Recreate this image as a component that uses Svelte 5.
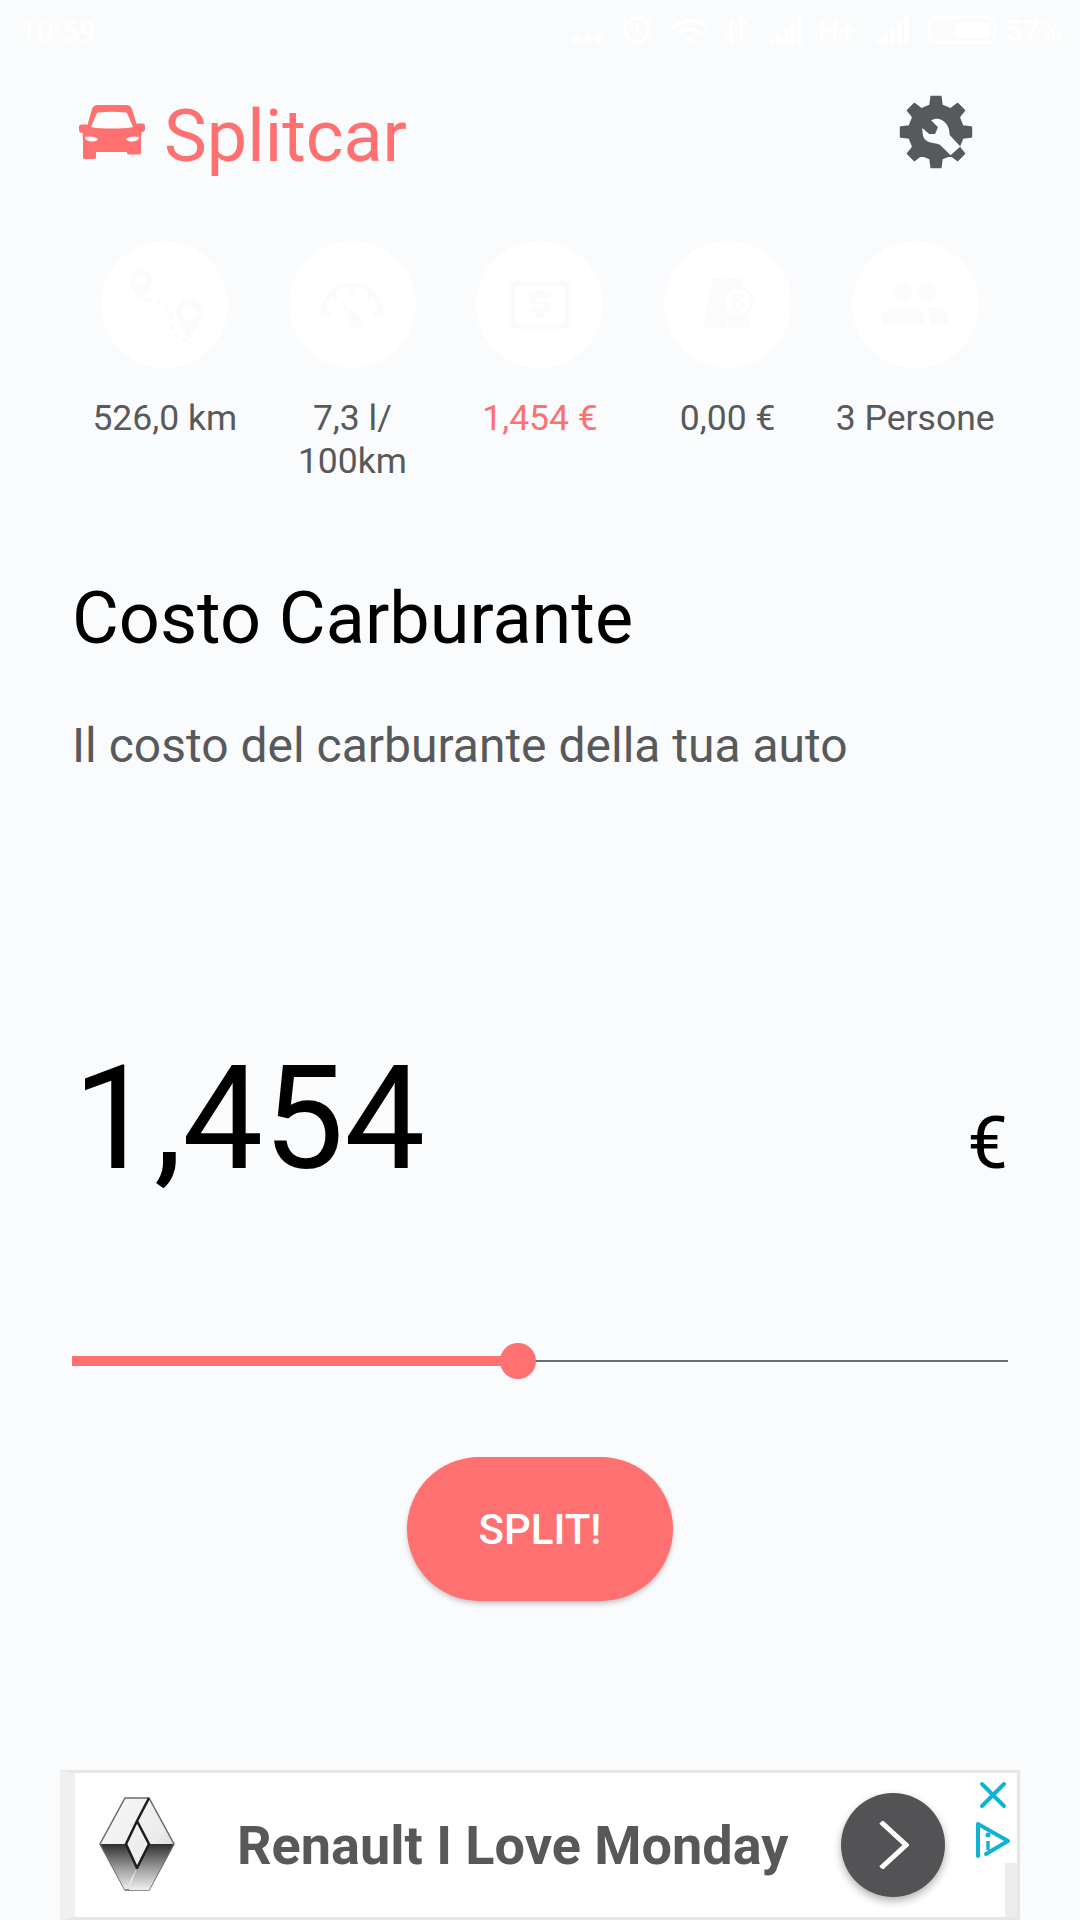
<script>
  const coral = '#ff7070';

  // outline of an 8-tooth cog, centred on 0,0
  function cogPath(inner, outer, teeth = 8) {
    const pts = [];
    const step = (Math.PI * 2) / teeth;
    for (let i = 0; i < teeth; i++) {
      const a = i * step - Math.PI / 2;
      const base = step * 0.27;
      const tip = step * 0.17;
      pts.push([a - base, inner], [a - tip, outer], [a + tip, outer], [a + base, inner]);
    }
    const xy = pts.map(([a, r]) => `${(Math.cos(a) * r).toFixed(2)} ${(Math.sin(a) * r).toFixed(2)}`);
    return 'M' + xy.join('L') + 'Z';
  }

  const stats = [
    { id: 'route', label: '526,0 km' },
    { id: 'gauge', label: '7,3 l/ 100km' },
    { id: 'cash', label: '1,454 €', active: true },
    { id: 'toll', label: '0,00 €' },
    { id: 'people', label: '3 Persone' },
  ];

  let value = $state(0.477);
</script>

{#snippet signal()}
  <svg width="35" height="28" viewBox="0 0 35 28" fill="#fff">
    <path d="M0 24h5v4H0zM7 18h5v10H7zM14 12h5v16h-5zM21 6h5v22h-5zM28 0h5v28h-5z" />
  </svg>
{/snippet}

<div class="page">
  <div class="status">
    <span class="clock">10:59</span>
    <div class="status-right">
      <svg class="tray" width="180" height="30" viewBox="0 0 180 30" fill="#fff">
        <circle cx="5" cy="24" r="4" /><circle cx="16" cy="24" r="4" /><circle cx="27" cy="24" r="4" />
        <circle cx="66" cy="15" r="12" fill="none" stroke="#fff" stroke-width="3" />
        <path d="M66 9v6l4 4M54 3l-3 3M78 3l3 3" fill="none" stroke="#fff" stroke-width="2.500" />
        <path d="M100 12a26 26 0 0 1 38 0l-3 3a21 21 0 0 0-32 0zM107 18a16 16 0 0 1 24 0l-3 3a11 11 0 0 0-18 0zM115 24a6 6 0 0 1 8 0l-4 5z" />
        <path d="M160 4v22l-5-6M170 26V4l6 6" fill="none" stroke="#fff" stroke-width="3" />
      </svg>
      <div class="cell one">{@render signal()}</div>
      <span class="net">H+</span>
      <div class="cell two">{@render signal()}</div>
      <div class="battery"><i></i></div>
      <span class="pct">57%</span>
    </div>
  </div>

  <header>
    <div class="brand">
      <svg class="car" width="66" height="54" viewBox="9 10 66 54">
        <path
          fill={coral}
          fill-rule="evenodd"
          d="M28 10h28c3 0 5 1.500 6 4l4.500 15 1-.5h5c1.500 0 2.500 1 2.500 2.500v3c0 1.500-1 3-3 3h-1c1 1.500 0 3 0 5v15.500c0 1-.5 2-2 2h-10c-1.500 0-2-1-2-2V57H26v5c0 1-.5 2-2 2H15c-1.500 0-2-1-2-2V44c0-2-1-3.500 0-6h-1c-2 0-3-1.500-3-3v-3c0-1.500 1-2.500 2.500-2.500h5l1 .5L22 14c1-2.500 3-4 6-4zM28.500 17.500c-1 0-1.500.5-2 1.500L21 32c7 2 35 2 42 0l-5.500-13c-.5-1-1-1.500-2-1.500-9-1-18-1-27 0zM15 42c0 3 3 4.500 8 4.500 3 0 5-1 5-2.500-2-2-8-3.500-13-2zM69 42c-5-1.500-11 0-13 2 0 1.500 2 2.500 5 2.500 5 0 8-1.500 8-4.500z"
        />
      </svg>
      <span class="name">Splitcar</span>
    </div>
    <button class="settings" aria-label="settings">
      <svg width="74" height="74" viewBox="-38 -38 76 76">
        <path d={cogPath(28, 36.500)} fill="#58595b" stroke="#58595b" stroke-width="2" stroke-linejoin="round" />
        <path
          transform="translate(-46 -47)"
          fill="#fafbfd"
          d="M41 35c5-3 11-2 15 3 3 3 4 8 4 12l11 12-10 9-11-11c-5-2-12-1-16-6-2-3-2-8-2-11l7 6h6l3-7z"
        />
      </svg>
    </button>
  </header>

  <div class="stats">
    {#each stats as s}
      <div class="stat">
        <div class="disc">
          {#if s.id === 'route'}
            <svg width="80" height="80" viewBox="0 0 80 80" fill="#fafbfd">
              <path fill-rule="evenodd" d="M16 4c6 0 11 5 11 11 0 4-5 13-11 20C10 28 5 19 5 15 5 9 10 4 16 4zm0 7a4.500 4.500 0 1 0 0 9 4.500 4.500 0 0 0 0-9z" />
              <path fill-rule="evenodd" d="M64 34c7 0 13 6 13 13 0 5-7 17-13 27-6-10-13-22-13-27 0-7 6-13 13-13zm0 6a7 7 0 1 0 0 15 7 7 0 0 0 0-15z" />
              <path d="M21 35c14-1 24 6 25 20 1 14 6 20 18 20" fill="none" stroke="#fafbfd" stroke-width="3" stroke-dasharray="6 4" />
            </svg>
          {:else if s.id === 'gauge'}
            <svg width="66" height="50" viewBox="0 0 66 50" fill="#fafbfd">
              <path d="M1 35a32 32 0 0 1 64 0H54c-2 0-2-4 0-4h5.500a26.500 26.500 0 0 0-6.500-15l-3 3c-2 1-4-1-3-3l3-3a26.500 26.500 0 0 0-15-6.500V12c-1 2-4 2-4 0V6.500A26.500 26.500 0 0 0 16 13l3 3c1 2-1 4-3 3l-3-3a26.500 26.500 0 0 0-6.500 15H12c2 0 2 4 0 4z" />
              <path d="M22 22c8 5 15 10 21 17 2 4-1 9-5 9-3 0-5-1-6-4z" />
            </svg>
          {:else if s.id === 'cash'}
            <svg width="60" height="48" viewBox="0 0 60 48">
              <rect x="2.500" y="2.500" width="55" height="43" rx="3" fill="none" stroke="#fafbfd" stroke-width="5" />
              <path d="M26 9h8v3h6v5H26v4h14v11h-6v5h-8v-5h-6v-5h14v-4H20V12h6z" fill="#fafbfd" />
            </svg>
          {:else if s.id === 'toll'}
            <svg class="toll" width="50" height="50" viewBox="0 0 50 50" fill="#fafbfd">
              <path d="M10 0h28l9 50H0z" />
              <path d="M24 0v8M24 42v8" stroke="#fff" stroke-width="2" stroke-dasharray="5 3" />
              <circle cx="35" cy="24" r="15.500" />
              <circle cx="35" cy="24" r="13" fill="#fff" />
              <text class="coin" x="35" y="32" text-anchor="middle">$</text>
            </svg>
          {:else}
            <svg width="66" height="44" viewBox="0 0 66 44" fill="#fafbfd">
              <circle cx="21" cy="9" r="9" /><circle cx="45" cy="9" r="9" />
              <path d="M0 42V33c0-6 10-9 21-9s21 3 21 9v9zM48 42V31c0-3-2-6-5-7 10-1 23 2 23 9v9z" />
            </svg>
          {/if}
        </div>
        <span class="label" class:active={s.active}>{s.label}</span>
      </div>
    {/each}
  </div>

  <section class="intro">
    <h1>Costo Carburante</h1>
    <p>Il costo del carburante della tua auto</p>
  </section>

  <div class="amount">
    <span class="figure">1,454</span>
    <span class="unit">€</span>
  </div>

  <div class="slider" style:--value="{value * 100}%">
    <div class="slider-fill"></div>
    <div class="slider-handle"></div>
  </div>

  <button class="split">SPLIT!</button>

  <aside class="ad">
    <svg class="logo" width="76" height="94" viewBox="14 13 76 94">
      <defs>
        <linearGradient id="upper" x1="0" y1="0" x2="1" y2="1">
          <stop offset="0" stop-color="#f8f8f8" />
          <stop offset="0.6" stop-color="#ececec" />
          <stop offset="1" stop-color="#c4c4c4" />
        </linearGradient>
        <linearGradient id="lower" x1="0" y1="0" x2="0" y2="1">
          <stop offset="0" stop-color="#2e2e2e" />
          <stop offset="0.55" stop-color="#a0a0a0" />
          <stop offset="1" stop-color="#f0f0f0" />
        </linearGradient>
      </defs>
      <path d="M40 14h24L89 60 64 106H40L15 60z" fill="url(#upper)" stroke="#6a6a6a" stroke-width="1.500" />
      <path d="M15.500 60H41l11 24-12 22z" fill="url(#lower)" />
      <path d="M88.500 60H64L52 84l-8 22h20z" fill="url(#lower)" />
      <path d="M41 60 52 37 64 60 52 84zM52 37 64 14" fill="none" stroke="#1c1c1c" stroke-width="2.500" stroke-linejoin="round" />
    </svg>
    <span class="headline">Renault I Love Monday</span>
    <div class="go">
      <svg width="32" height="48" viewBox="0 0 32 48"><path d="M4 1l25 23L4 47" fill="none" stroke="#fff" stroke-width="5" /></svg>
    </div>
    <div class="ad-marks">
      <svg width="28" height="28" viewBox="0 0 28 28"><path d="M3 3l22 22M25 3 3 25" stroke="#0fb4d4" stroke-width="4" stroke-linecap="round" /></svg>
      <svg width="36" height="38" viewBox="0 0 36 38">
        <path d="M3 3 33 20 11 33M3 3v32" fill="none" stroke="#0fb4d4" stroke-width="4" stroke-linecap="round" stroke-linejoin="round" />
        <circle cx="13" cy="14" r="2.500" fill="#0fb4d4" />
        <path d="M13 20v9" stroke="#0fb4d4" stroke-width="3.500" />
      </svg>
    </div>
    <div class="ad-corner"></div>
  </aside>
</div>

<style>
  :global(body) {
    margin: 0;
    background: #fafbfd;
  }

  .page {
    height: 1920px;
    box-sizing: border-box;
    display: flex;
    flex-direction: column;
    overflow: hidden;
    background: #fafbfd;
    color: #000;
    font-family: Roboto, "Liberation Sans", sans-serif;
  }

  .status {
    height: 60px;
    box-sizing: border-box;
    padding: 14px 18px 0 20px;
    display: flex;
    justify-content: space-between;
    color: #fff;
    font-size: 30px;
    font-weight: 500;
  }
  .status-right {
    display: flex;
    align-items: center;
    height: 32px;
  }
  .cell {
    display: flex;
    margin-left: 18px;
  }
  .net {
    margin-left: 14px;
  }
  .cell.two {
    margin-left: 20px;
  }
  .battery {
    width: 68px;
    height: 28px;
    margin-left: 17px;
    box-sizing: border-box;
    border: 3px solid #fff;
    border-radius: 8px;
    padding: 3px;
    display: flex;
    justify-content: flex-end;
  }
  .battery i {
    width: 34px;
    background: #fff;
  }
  .pct {
    margin-left: 10px;
  }

  header {
    height: 128px;
    box-sizing: border-box;
    padding: 43px 107px 0 79px;
    display: flex;
    justify-content: space-between;
  }
  .brand {
    display: flex;
    align-items: flex-start;
    gap: 19px;
    height: 68px;
    color: #ff7070;
  }
  .car {
    margin-top: 2px;
  }
  .name {
    font-size: 72px;
    line-height: 68px;
  }
  .settings {
    width: 74px;
    height: 74px;
    margin-top: -8px;
    padding: 0;
    border: 0;
    background: none;
  }

  .stats {
    margin-top: 53px;
    padding: 0 71px;
    display: grid;
    grid-template-columns: repeat(5, 1fr);
  }
  .stat {
    display: flex;
    flex-direction: column;
    align-items: center;
  }
  .disc {
    width: 127px;
    height: 127px;
    border-radius: 50%;
    background: #fff;
    display: flex;
    align-items: center;
    justify-content: center;
  }
  .toll {
    margin-top: -4px;
  }
  .coin {
    font-size: 24px;
    font-weight: 700;
  }
  .label {
    width: 170px;
    margin-top: 29px;
    text-align: center;
    font-size: 35.500px;
    line-height: 43px;
    color: #58595b;
  }
  .label.active {
    color: #ff7070;
  }

  .intro {
    margin-top: 96px;
    padding: 0 72px;
    height: 220px;
  }
  h1 {
    margin: 0;
    font-size: 72px;
    font-weight: 400;
    line-height: 80px;
  }
  p {
    margin: 61px 0 0;
    font-size: 48px;
    line-height: 52px;
    color: #58595b;
  }

  .amount {
    margin-top: 235px;
    padding: 0 72px 0 73px;
    display: flex;
    justify-content: space-between;
    align-items: baseline;
    height: 170px;
  }
  .figure {
    font-size: 144px;
    line-height: 170px;
  }
  .unit {
    font-size: 72px;
  }

  .slider {
    position: relative;
    margin: 156px 72px 0;
    height: 2px;
    background: #6d6e70;
  }
  .slider-fill {
    position: absolute;
    left: 0;
    top: -4px;
    width: var(--value);
    height: 10px;
    background: #ff7070;
  }
  .slider-handle {
    position: absolute;
    left: var(--value);
    top: 1px;
    width: 36px;
    height: 36px;
    transform: translate(-50%, -50%);
    border-radius: 50%;
    background: #ff7070;
  }

  .split {
    align-self: center;
    width: 266px;
    height: 144px;
    margin-top: 95px;
    padding: 0;
    border: 0;
    border-radius: 72px;
    background: #ff7070;
    box-shadow: 0 3px 5px rgba(0, 0, 0, 0.2);
    color: #fff;
    font: 500 42px Roboto, sans-serif;
  }

  .ad {
    position: relative;
    margin: auto 60px 0;
    height: 150px;
    box-sizing: border-box;
    padding-left: 24px;
    display: flex;
    align-items: center;
    background: #fff;
    border: 3px solid #e6e6e6;
    border-left-width: 15px;
    border-left-color: #f0f0f0;
  }
  .logo {
    margin-top: -3px;
  }
  .headline {
    margin-left: 62px;
    font-size: 54px;
    font-weight: 700;
    color: #58585a;
    white-space: nowrap;
  }
  .go {
    position: absolute;
    left: 766px;
    top: 20px;
    width: 104px;
    height: 104px;
    border-radius: 50%;
    background: #535355;
    box-shadow: 0 4px 8px rgba(0, 0, 0, 0.3);
    display: flex;
    align-items: center;
    justify-content: center;
  }
  .ad-marks {
    position: absolute;
    right: 6px;
    top: 8px;
    display: flex;
    flex-direction: column;
    align-items: center;
    gap: 12px;
  }
  .ad-corner {
    position: absolute;
    right: 0;
    bottom: 0;
    width: 12px;
    height: 54px;
    background: #ededed;
  }
</style>
